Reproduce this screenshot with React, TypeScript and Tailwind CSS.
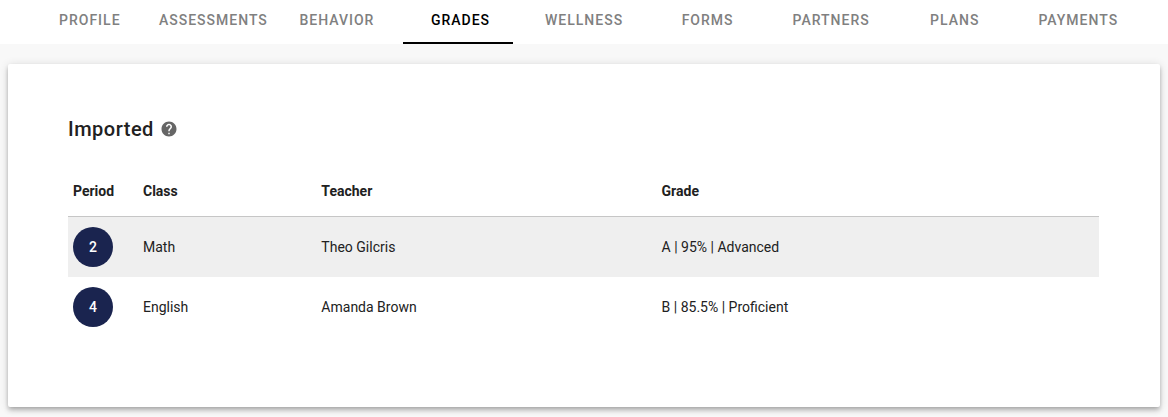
import { MdHelp } from "react-icons/md";

interface Grade {
    period: number;
    className: string;
    teacher: string;
    grade: string;
}

const TABS = [
    "Profile",
    "Assessments",
    "Behavior",
    "Grades",
    "Wellness",
    "Forms",
    "Partners",
    "Plans",
    "Payments",
];

const GRADES: Grade[] = [
    { period: 2, className: "Math", teacher: "Theo Gilcris", grade: "A | 95% | Advanced" },
    { period: 4, className: "English", teacher: "Amanda Brown", grade: "B | 85.5% | Proficient" },
];

const TabBar = ({ active }: { active: string }) => (
    <nav className="flex bg-white pr-[30px] pl-[26px]">
        {TABS.map((tab) => (
            <div key={tab} className="flex flex-1 justify-center">
                <a
                    href={`#${tab.toLowerCase()}`}
                    aria-current={tab === active ? "page" : undefined}
                    className={`flex h-11 w-[110px] shrink-0 items-center justify-center border-b-2 pb-0.5 pl-1 text-sm font-medium uppercase tracking-[1px] ${
                        tab === active
                            ? "border-black text-black"
                            : "border-transparent text-[#808080]"
                    }`}
                >
                    {tab}
                </a>
            </div>
        ))}
    </nav>
);

const GradesTable = ({ rows }: { rows: Grade[] }) => (
    <table className="w-full table-fixed border-separate border-spacing-0 text-left text-sm">
        <thead>
            <tr className="h-13 *:border-b *:border-[#c6c6c6] *:px-[5px] *:font-bold">
                <th className="w-[70px]">Period</th>
                <th className="w-[17.3%]">Class</th>
                <th className="w-[33%]">Teacher</th>
                <th>Grade</th>
            </tr>
        </thead>
        <tbody>
            {rows.map((row) => (
                <tr key={row.period} className="h-15 *:px-[5px] odd:bg-[#efefef]">
                    <td>
                        <span className="flex size-10 items-center justify-center rounded-full bg-[#1a244f] font-medium text-white">
                            {row.period}
                        </span>
                    </td>
                    <td>{row.className}</td>
                    <td>{row.teacher}</td>
                    <td>{row.grade}</td>
                </tr>
            ))}
        </tbody>
    </table>
);

const App = () => {
    return (
        <div className="min-h-screen bg-[#f8f8f8] font-['Roboto',sans-serif] text-[#212121]">
            <TabBar active="Grades" />

            <main className="px-2 pt-5 pb-2.5">
                <section className="rounded-xs bg-white pt-[49px] pr-[61px] pb-[70px] pl-15 shadow-[0_2px_4px_-1px_rgba(0,0,0,0.2),0_4px_5px_0_rgba(0,0,0,0.14),0_1px_10px_0_rgba(0,0,0,0.12)]">

                    {/* Header */}
                    <div className="mb-5 flex items-center gap-1.5">
                        <h2 className="text-xl/8 font-medium tracking-wide">Imported</h2>
                        <button type="button" aria-label="About imported grades">
                            <MdHelp className="size-[18px] text-[#666666]" />
                        </button>
                    </div>

                    <GradesTable rows={GRADES} />
                </section>
            </main>
        </div>
    );
};

export default App;
